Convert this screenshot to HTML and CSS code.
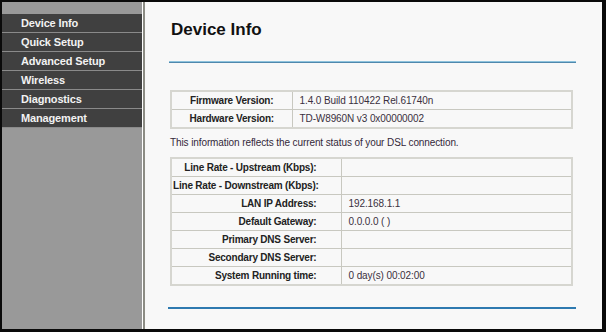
FILE: index.html
```html
<!DOCTYPE html>
<html lang="en">
<head>
  <meta charset="UTF-8" />
  <title>Device Info</title>
  <link rel="stylesheet" href="styles.css">
</head>
<body>
  <div class="frame">
    <!-- menu lateral -->
    <div class="sidebar">
      <a class="menu-item" href="#">Device Info</a>
      <a class="menu-item" href="#">Quick Setup</a>
      <a class="menu-item" href="#">Advanced Setup</a>
      <a class="menu-item" href="#">Wireless</a>
      <a class="menu-item" href="#">Diagnostics</a>
      <a class="menu-item" href="#">Management</a>
    </div>
    <div class="divider"></div>

    <div class="content">
      <h1>Device Info</h1>
      <div class="rule"></div>

      <table class="info version">
        <colgroup><col class="label-col"><col></colgroup>
        <tr><th>Firmware Version:</th><td>1.4.0 Build 110422 Rel.61740n</td></tr>
        <tr><th>Hardware Version:</th><td>TD-W8960N v3 0x00000002</td></tr>
      </table>

      <p class="note">This information reflects the current status of your DSL connection.</p>

      <table class="info status">
        <colgroup><col class="label-col"><col></colgroup>
        <tr><th>Line Rate - Upstream (Kbps):</th><td></td></tr>
        <tr><th>Line Rate - Downstream (Kbps):</th><td></td></tr>
        <tr><th>LAN IP Address:</th><td>192.168.1.1</td></tr>
        <tr><th>Default Gateway:</th><td>0.0.0.0 ( )</td></tr>
        <tr><th>Primary DNS Server:</th><td></td></tr>
        <tr><th>Secondary DNS Server:</th><td></td></tr>
        <tr><th>System Running time:</th><td>0 day(s) 00:02:00</td></tr>
      </table>

      <div class="rule rule-bottom"></div>
    </div>
  </div>
</body>
</html>
```

FILE: styles.css
```css
html, body {
  margin: 0;
  padding: 0;
  background: #0a0a0a;
  width: 606px;
  height: 332px;
  overflow: hidden;
}

body {
  font-family: "Liberation Sans", Arial, sans-serif;
}

.frame {
  display: flex;
  margin: 2px 0 0 2px;
  width: 600px;
  height: 327px;
  background: #f8f8f8;
}

.sidebar {
  width: 140px;
  background: #999999;
  padding-top: 12px;
  display: flex;
  flex-direction: column;
}

.menu-item {
  display: block;
  height: 18px;
  line-height: 18px;
  padding-left: 19px;
  margin-bottom: 1px;
  background: #404040;
  color: #f2f2f2;
  font-size: 11px;
  font-weight: bold;
  letter-spacing: -0.15px;
  text-decoration: none;
  box-shadow: 0 1px 0 #8a8a8a;
}

.divider {
  width: 1px;
  background: #ffffff;
  border-right: 2px solid #8c8c84;
}

.content {
  flex: 1;
  padding: 0 26px 0 24px;
}

h1 {
  margin: 17px 0 0 2px;
  font-size: 17px;
  line-height: 22px;
  color: #111;
}

.rule {
  margin-top: 20px;
  height: 1px;
  background: #8ec3dd;
  border-bottom: 1px solid #4f88ad;
}

.info {
  margin-left: 1px;
  width: 403px;
  table-layout: fixed;
  border-collapse: collapse;
  border: 2px solid #d6d6d0;
  font-size: 10px;
}

.info th, .info td {
  height: 17px;
  padding: 0 6px;
  border: 1px solid #c8c8c0;
  color: #222;
  white-space: nowrap;
  letter-spacing: -0.2px;
}

.info td {
  color: #3a3040;
  padding-left: 7px;
  letter-spacing: -0.1px;
}

.version {
  margin-top: 27px;
}

.version .label-col {
  width: 121px;
}

.version th {
  text-align: center;
}

.note {
  margin: 8px 0 9px 1px;
  font-size: 10px;
  letter-spacing: -0.1px;
  color: #33283a;
}

.status .label-col {
  width: 170px;
}

.status th {
  padding: 0 24px 0 1px;
  text-align: right;
}

.rule-bottom {
  margin-top: 21px;
  height: 0;
  background: none;
  border-bottom: 2px solid #2e7ab0;
  margin-left: -1px;
}
```
